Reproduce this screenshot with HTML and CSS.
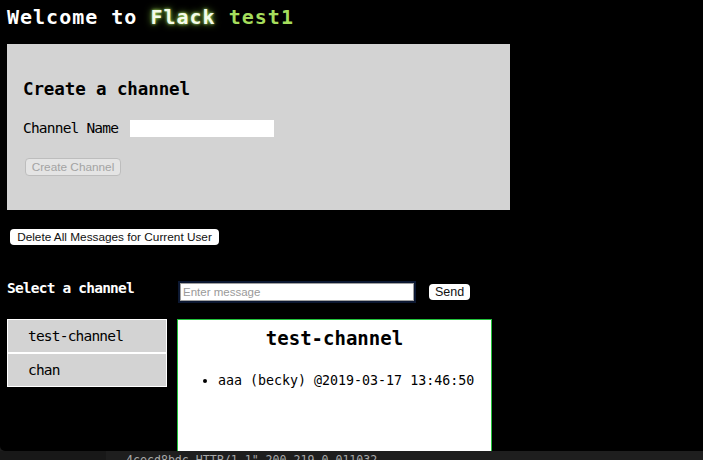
FILE: index.html
```html
<!DOCTYPE html>
<html>
<head>
<meta charset="utf-8">
<title>Flack</title>
<link rel="stylesheet" href="styles.css">
</head>
<body>
<div class="window">
  <h1 class="title">Welcome to <span class="glow">Flack</span> <span class="user">test1</span></h1>
  <section class="create">
    <h2 class="create-title">Create a channel</h2>
    <div class="name-row">
      <label class="name-label" for="cname">Channel Name</label>
      <input class="name-input" id="cname" type="text">
    </div>
    <button class="btn btn-disabled" disabled>Create Channel</button>
  </section>
  <button class="btn btn-delete">Delete All Messages for Current User</button>
  <div class="main">
    <h3 class="select-title">Select a channel</h3>
    <div class="compose">
      <input class="msg-input" type="text" placeholder="Enter message">
      <button class="btn btn-send">Send</button>
    </div>
    <ul class="channels">
      <li class="channel">test-channel</li>
      <li class="channel">chan</li>
    </ul>
    <div class="chat">
      <h3 class="chat-title">test-channel</h3>
      <ul class="messages">
        <li>aaa (becky) @2019-03-17 13:46:50</li>
      </ul>
    </div>
  </div>
</div>
<div class="terminal">
  <div class="term-left"></div>
  <div class="term-text">4cecd8bdc HTTP/1.1" 200 219 0.011032</div>
</div>
</body>
</html>
```

FILE: styles.css
```css
html, body {
  margin: 0;
  padding: 0;
}
body {
  background: #1c1c1c;
  width: 703px;
  height: 460px;
  overflow: hidden;
  font-family: "DejaVu Sans Mono", "Liberation Mono", monospace;
}
.window {
  height: 451px;
  background: #000;
  border-bottom-left-radius: 5px;
  overflow: hidden;
  padding-left: 7px;
  box-sizing: border-box;
  color: #000;
}
.title {
  margin: 4px 0 14px;
  font-size: 20px;
  line-height: 26px;
  letter-spacing: 1px;
  font-weight: bold;
  color: #fff;
  white-space: nowrap;
}
.glow {
  color: #f4fbe9;
  text-shadow: 0 0 3px #a8e05e, 0 0 7px #86c43f;
}
.user {
  color: #a5dd5c;
}
.create {
  width: 503px;
  box-sizing: border-box;
  background: #d3d3d3;
  padding: 35px 16px 34px;
}
.create-title {
  margin: 0;
  font-size: 17.5px;
  line-height: 21px;
  font-weight: bold;
  letter-spacing: -0.1px;
}
.name-row {
  display: flex;
  align-items: center;
  margin-top: 20px;
  height: 17px;
}
.name-label {
  font-size: 14.5px;
  letter-spacing: -0.8px;
  line-height: 17px;
  margin-right: 12px;
}
.name-input {
  width: 144px;
  height: 17px;
  box-sizing: border-box;
  border: none;
  background: #fff;
  margin: 0;
  padding: 0;
}
.btn {
  font-family: "Liberation Sans", Arial, sans-serif;
  font-size: 11.8px;
  box-sizing: border-box;
  border-radius: 4px;
  padding: 0;
  margin: 0;
  display: block;
}
.btn-disabled {
  margin: 21px 0 0 2px;
  width: 96px;
  height: 18px;
  background: #e4e4e4;
  border: 1px solid #bdbdbd;
  color: #a3a3a3;
}
.btn-delete {
  margin: 19px 0 0 3px;
  width: 209px;
  height: 16px;
  background: #fff;
  border: none;
  color: #111;
}
.main {
  display: grid;
  grid-template-columns: 160px 315px;
  grid-template-rows: 40px 200px;
  column-gap: 10px;
  margin-top: 34px;
}
.select-title {
  margin: 0;
  font-size: 14.5px;
  line-height: 18px;
  letter-spacing: -0.8px;
  font-weight: bold;
  color: #fff;
}
.compose {
  display: flex;
  align-items: flex-start;
  margin-top: 4px;
}
.msg-input {
  margin: 0 0 0 3px;
  width: 234px;
  height: 18px;
  box-sizing: border-box;
  border: 1px solid #a0a0a0;
  outline: 2px solid #0c1832;
  background: #fff;
  padding: 0 2px;
  font-family: "Liberation Sans", Arial, sans-serif;
  font-size: 11.5px;
}
.msg-input::placeholder {
  color: #9a9a9a;
}
.btn-send {
  margin: 1px 0 0 15px;
  width: 41px;
  height: 16px;
  background: #fff;
  border: none;
  color: #111;
  font-size: 12.5px;
}
.channels {
  list-style: none;
  margin: 0;
  padding: 0;
  align-self: start;
}
.channel {
  border: 1px solid #fff;
  background: #d3d3d3;
  height: 32px;
  line-height: 32px;
  padding-left: 20px;
  font-size: 14.5px;
  letter-spacing: -0.8px;
}
.chat {
  background: #fff;
  border: 1px solid #22c23c;
  box-sizing: border-box;
}
.chat-title {
  margin: 7px 0 0;
  text-align: center;
  font-size: 19px;
  line-height: 23px;
  font-weight: bold;
}
.messages {
  margin: 23px 0 0;
  padding-left: 40px;
  font-size: 13.3px;
  line-height: 16px;
}
.terminal {
  display: flex;
  height: 9px;
  overflow: hidden;
}
.term-left {
  width: 106px;
  background: #181818;
}
.term-text {
  flex: 1;
  padding: 1.5px 0 0 20px;
  background: #1e1e1e;
  color: #a8a8a8;
  font-size: 11.6px;
  line-height: 14px;
  white-space: nowrap;
}
```
